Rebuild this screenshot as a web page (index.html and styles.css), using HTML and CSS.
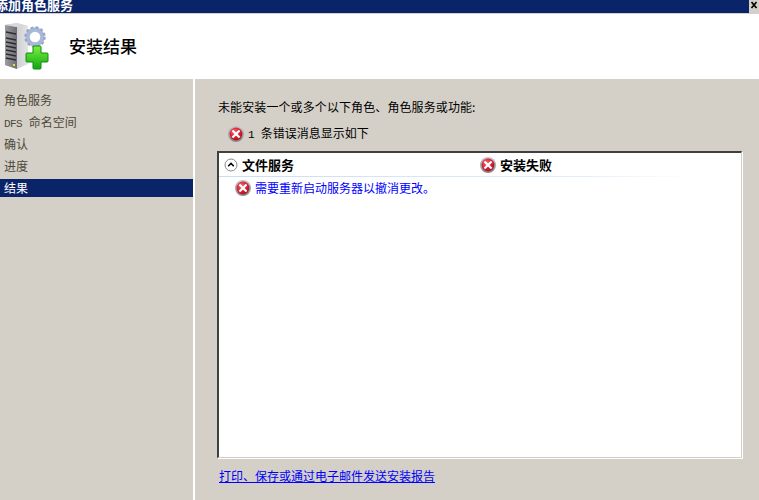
FILE: index.html
```html
<!DOCTYPE html>
<html lang="zh-CN">
<head>
<meta charset="utf-8">
<title>添加角色服务</title>
<link rel="stylesheet" href="styles.css">
</head>
<body>
<svg class="defs" width="0" height="0" aria-hidden="true">
  <defs>
    <radialGradient id="redball" cx="40%" cy="35%" r="70%">
      <stop offset="0" stop-color="#f4707a"/>
      <stop offset="0.6" stop-color="#d81c2c"/>
      <stop offset="1" stop-color="#a01420"/>
    </radialGradient>
    <linearGradient id="ring" x1="0" y1="0" x2="0" y2="1">
      <stop offset="0" stop-color="#c4c4cc"/>
      <stop offset="1" stop-color="#88888f"/>
    </linearGradient>
    <symbol id="err" viewBox="0 0 16 16">
      <circle cx="8" cy="8" r="8" fill="url(#ring)"/>
      <circle cx="8" cy="8" r="6.4" fill="url(#redball)"/>
      <path d="M5.2 5.2l5.6 5.6M10.8 5.2l-5.6 5.6" stroke="#fff" stroke-width="2.2" stroke-linecap="square" fill="none"/>
    </symbol>
  </defs>
</svg>
<div class="titlebar">
  <span class="title">添加角色服务</span>
  <span class="close"><svg width="9" height="10" viewBox="0 0 9 10"><path d="M1.5 2l5 6M6.5 2l-5 6" stroke="#000" stroke-width="1.7" fill="none"/></svg></span>
</div>
<header class="header">
  <svg class="logo" width="50" height="50" viewBox="0 0 50 50">
    <defs>
      <linearGradient id="front" x1="0" y1="0" x2="1" y2="0"><stop offset="0" stop-color="#9c9ca0"/><stop offset="1" stop-color="#6c6c72"/></linearGradient>
      <linearGradient id="side" x1="0" y1="0" x2="1" y2="0"><stop offset="0" stop-color="#b8b8bc"/><stop offset="1" stop-color="#e4e4e6"/></linearGradient>
      <linearGradient id="plus" x1="0" y1="0" x2="0" y2="1"><stop offset="0" stop-color="#7cf040"/><stop offset="1" stop-color="#10a810"/></linearGradient>
    </defs>
    <path d="M4 3L16 1 27 4V42L16 47 4 43Z" fill="url(#side)"/>
    <path d="M4 3L16 5V47L4 43Z" fill="url(#front)"/>
    <path d="M4 3L16 1 27 4 16 5Z" fill="#d8d8dc"/>
    <path d="M5 10l10 2M5 16l10 2M5 20l10 2M5 24l10 2M5 28l10 2M5 32l10 2M5 36l10 2" stroke="#2c2c30" stroke-width="1.4"/>
    <rect x="12" y="42" width="2" height="2" fill="#e8e040"/>
    <g transform="translate(34 15) scale(.88)">
      <circle r="8.5" fill="none" stroke="#a8b8d8" stroke-width="5"/>
      <circle r="11" fill="none" stroke="#98a4c0" stroke-width="2.4" stroke-dasharray="3.2 2.6"/>
      <circle r="5" fill="#fff"/>
    </g>
    <path d="M33 24h6a1 1 0 0 1 1 1v6h6a1 1 0 0 1 1 1v7a1 1 0 0 1-1 1h-6v6a1 1 0 0 1-1 1h-6a1 1 0 0 1-1-1v-6h-6a1 1 0 0 1-1-1v-7a1 1 0 0 1 1-1h6v-6a1 1 0 0 1 1-1z" fill="url(#plus)" stroke="#0c8c14"/>
  </svg>
  <h1 class="heading">安装结果</h1>
</header>
<div class="main">
  <nav class="sidebar">
    <div class="step">角色服务</div>
    <div class="step"><span class="mono">DFS</span> 命名空间</div>
    <div class="step">确认</div>
    <div class="step">进度</div>
    <div class="step step-active">结果</div>
  </nav>
  <section class="content">
    <p class="lead">未能安装一个或多个以下角色、角色服务或功能:</p>
    <p class="summary"><svg class="icon"><use href="#err"/></svg><span><span class="mono">1</span> 条错误消息显示如下</span></p>
    <div class="results">
      <div class="result-head">
        <span class="result-name">
          <svg class="chevron" width="14" height="14" viewBox="0 0 14 14"><circle cx="7" cy="7" r="6" fill="#fff" stroke="#8a8a8a"/><path d="M4.2 8.2L7 5.4l2.8 2.8" fill="none" stroke="#000" stroke-width="1.5"/></svg>
          文件服务
        </span>
        <span class="result-status"><svg class="icon"><use href="#err"/></svg>安装失败</span>
      </div>
      <div class="result-row"><svg class="icon"><use href="#err"/></svg><a class="link" href="#">需要重新启动服务器以撤消更改。</a></div>
    </div>
    <a class="link report" href="#">打印、保存或通过电子邮件发送安装报告</a>
  </section>
</div>
</body>
</html>
```
FILE: styles.css
```css
* { box-sizing: border-box; }
html, body { margin: 0; height: 500px; overflow: hidden; }
body {
  width: 759px;
  display: flex;
  flex-direction: column;
  background: #d4d0c8;
  font: 12px/14px "Noto Sans CJK SC", "Liberation Sans", sans-serif;
  color: #000;
}
.defs { position: absolute; }
.mono {
  font-family: "Liberation Mono", monospace;
  font-size: 11px;
  letter-spacing: -0.6px;
  margin-right: 4px;
}
.titlebar {
  height: 14px;
  flex: none;
  background: #0a246a;
  border-bottom: 1px solid #d4d0c8;
  display: flex;
  justify-content: space-between;
  overflow: hidden;
}
.title {
  margin: -2px 0 0 -5px;
  color: #fff;
  font-size: 13px;
  font-weight: 700;
  line-height: 14px;
}
.close {
  width: 10px;
  height: 13px;
  background: #d4d0c8;
  display: flex;
  align-items: flex-start;
  justify-content: center;
}
.header {
  height: 65px;
  flex: none;
  background: #fff;
  display: flex;
  align-items: center;
  padding: 0 0 2px 1px;
}
.logo { flex: none; margin-top: 3px; }
.heading {
  margin: 0 0 0 18px;
  font-size: 17px;
  line-height: 20px;
  font-weight: 500;
}
.main { flex: 1; display: flex; min-height: 0; }
.sidebar {
  width: 195px;
  flex: none;
  border-right: 2px solid #fff;
  padding-top: 12px;
  color: #4c4838;
}
.step { height: 22px; line-height: 18px; padding-left: 4px; }
.step-active { height: 18px; background: #0a246a; color: #fff; }
.content {
  flex: 1;
  display: flex;
  flex-direction: column;
  padding: 21px 17px 0 23px;
}
.lead { margin: 0; height: 14px; letter-spacing: 0.1px; }
.summary {
  margin: 12px 0 0 10px;
  height: 16px;
  display: flex;
  align-items: center;
  gap: 4px;
}
.icon { width: 16px; height: 16px; flex: none; display: block; }
.results {
  margin: 9px 0 0 -1px;
  height: 307px;
  background: #fff;
  border: 1px solid #fff;
  border-top: 2px solid #404040;
  border-left: 2px solid #404040;
  border-right-color: #d4d0c8;
  border-bottom-color: #d4d0c8;
  box-shadow: 1px 1px 0 #fff;
}
.result-head {
  height: 24px;
  display: flex;
  align-items: center;
  padding: 0 0 0 5px;
  font-size: 13px;
  font-weight: 700;
  border-bottom: 1px solid transparent;
  border-image: linear-gradient(90deg, #c8dcf4, #e4eefa 70%, #fff 90%) 1;
}
.result-name { width: 256px; display: flex; align-items: center; gap: 4px; }
.result-status { display: flex; align-items: center; gap: 4px; }
.result-row {
  height: 22px;
  padding-left: 16px;
  display: flex;
  align-items: center;
  gap: 4px;
}
.link { color: #0000ff; text-decoration: none; }
.report { margin: 11px 0 0 1px; align-self: flex-start; text-decoration: underline; }
```
